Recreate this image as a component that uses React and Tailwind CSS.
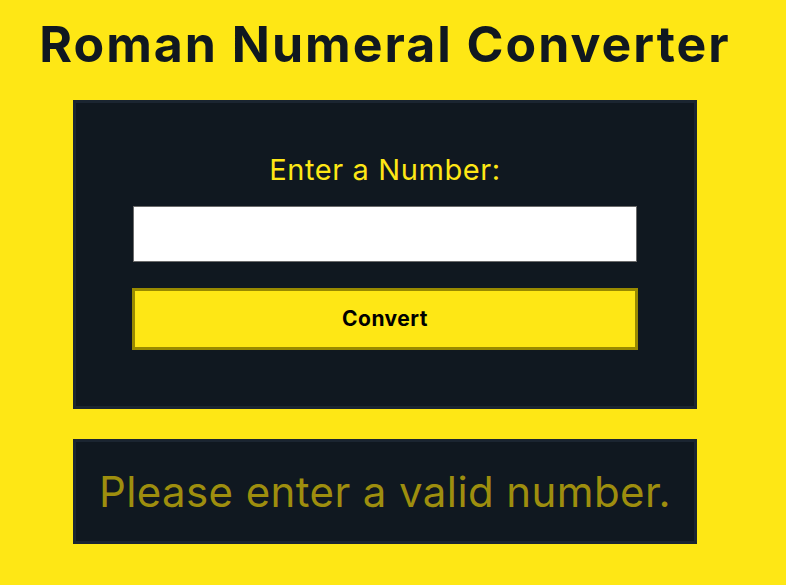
export default function App() {
  return (
    <div className="min-h-[585px] w-full bg-[#fee715] pr-[16px] font-['Inter','Lato',sans-serif] text-[#101820]">
      <div className="flex flex-col items-center">
        <h1 className="mt-[12px] whitespace-nowrap text-[50px] font-bold leading-[64px] tracking-[2px] text-[#101820]">
          Roman Numeral Converter
        </h1>
        <form
          className="mt-[24px] flex w-[624px] flex-col items-center border-[3px] border-[#1b2531] bg-[#101820] pt-[49px] pb-[56px]"
          onSubmit={(e) => e.preventDefault()}
        >
          <label htmlFor="number" className="text-[29px] leading-[36px] tracking-[0.6px] text-[#fee715]">
            Enter a Number:
          </label>
          <input
            id="number"
            type="number"
            className="mt-[18px] h-[56px] w-[504px] border border-[#6b6b6b] bg-white px-2 text-[20px] outline-none"
          />
          <button
            type="submit"
            className="mt-[26px] h-[62px] w-[506px] border-[3px] border-[#998a00] bg-[#fee715] text-[21px] font-bold tracking-[0.5px] text-black"
          >
            Convert
          </button>
        </form>
        <div className="mt-[30px] flex h-[105px] w-[624px] items-center justify-center border-[3px] border-[#1b2531] bg-[#101820]">
          <p className="whitespace-nowrap text-[42px] leading-[48px] tracking-[0.4px] text-[#9e8e0e]">Please enter a valid number.</p>
        </div>
      </div>
    </div>
  )
}
